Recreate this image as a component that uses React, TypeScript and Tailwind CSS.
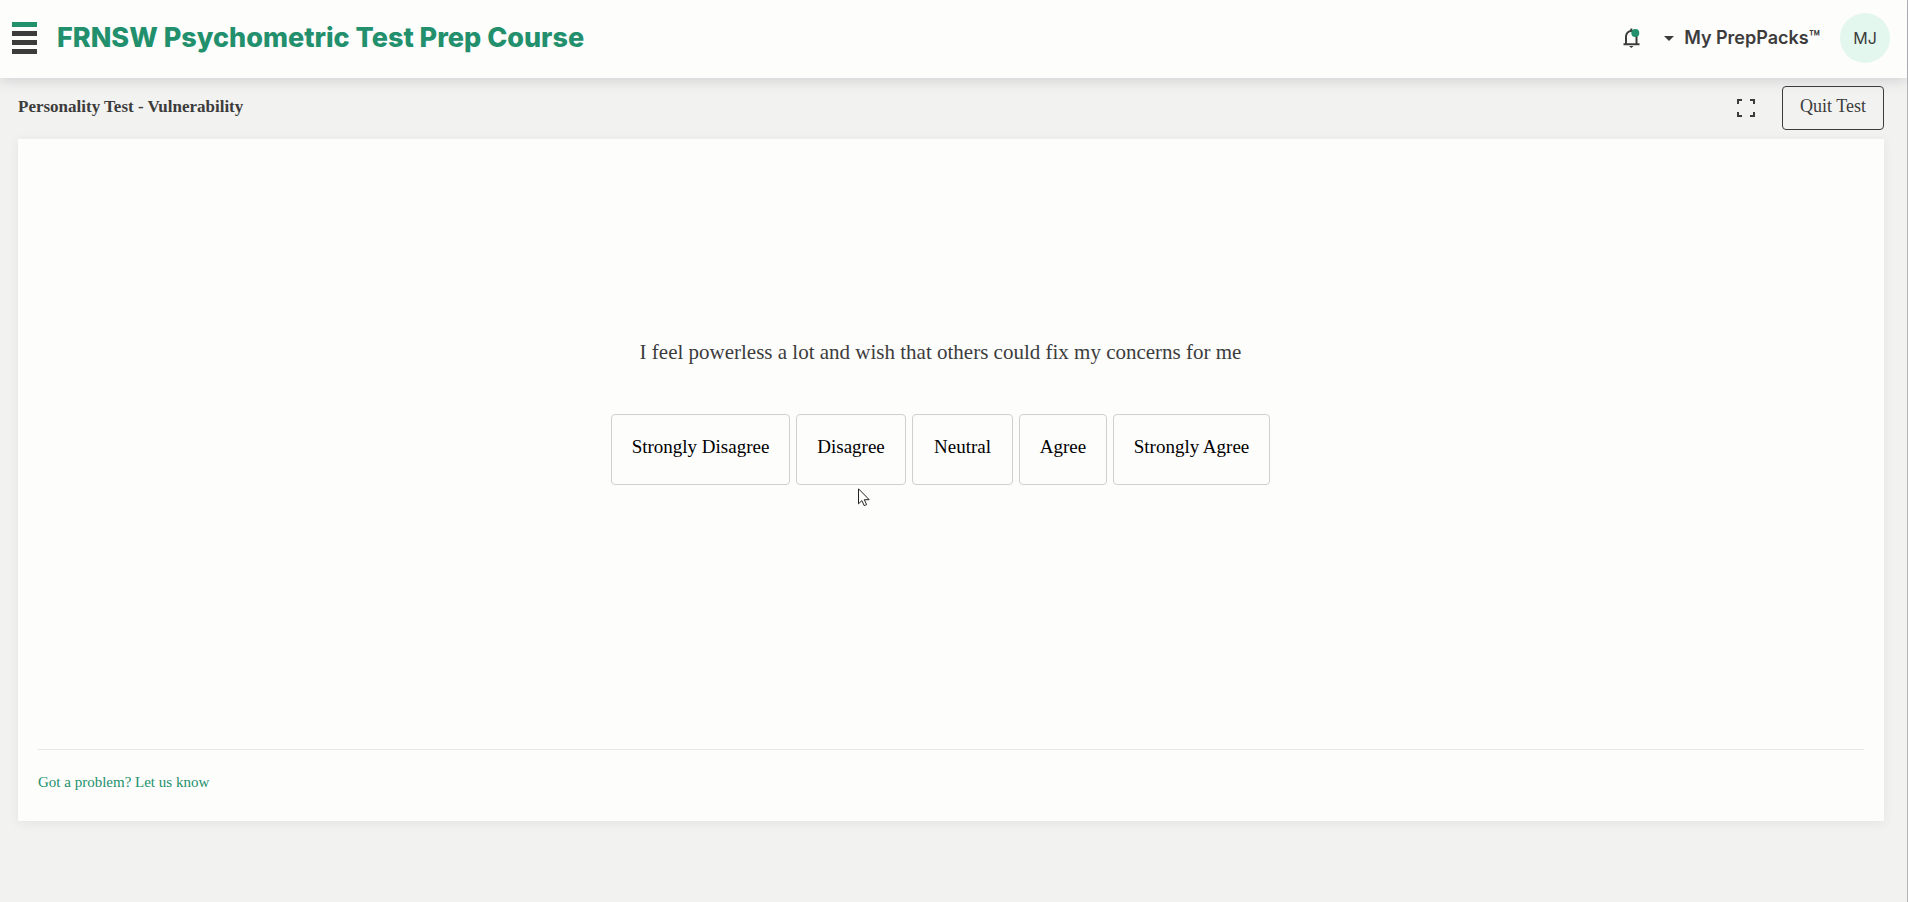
import { useState } from 'react';

const answers = [
  { label: 'Strongly Disagree', width: 'w-[179px]' },
  { label: 'Disagree', width: 'w-[110px]' },
  { label: 'Neutral', width: 'w-[101px]' },
  { label: 'Agree', width: 'w-[88px]' },
  { label: 'Strongly Agree', width: 'w-[157px]' },
];

function Header() {
  return (
    <header className="flex h-[78px] items-center justify-between bg-[#fdfdfc] pb-[2px] pl-3 pr-[17px] font-[Inter,sans-serif] shadow-[0_1px_14px_rgba(60,60,90,0.22)]">
      <div className="flex items-center gap-5">
        <button aria-label="Menu" className="flex flex-col gap-1">
          <span className="h-[5px] w-[25px] bg-[#22906c]" />
          <span className="h-[5px] w-[25px] bg-[#3c3c3c]" />
          <span className="h-[5px] w-[25px] bg-[#3c3c3c]" />
          <span className="h-[5px] w-[25px] bg-[#3c3c3c]" />
        </button>
        <h1 className="text-[27px] leading-8 font-extrabold text-[#22906c]">FRNSW Psychometric Test Prep Course</h1>
      </div>

      <div className="flex items-center text-[#3c3c3c]">
        <button aria-label="Notifications" className="mr-6">
          <svg width="17" height="20" viewBox="0 0 17 20" fill="none" stroke="currentColor" strokeWidth="2">
            <path d="M0.5 16.2h16M3 16V8.5C3 5.4 5.3 3 8.3 3s5.2 2.4 5.2 5.5V16" />
            <path d="M8.3 0.5v3" />
            <path d="M6 18h4.6L8.3 20z" fill="currentColor" stroke="none" />
            <circle cx="12.3" cy="5" r="4" fill="#22906c" stroke="none" />
          </svg>
        </button>
        <button className="mr-5 flex items-center gap-[10px] text-lg font-semibold">
          <svg width="10" height="5" viewBox="0 0 10 5" fill="currentColor">
            <path d="M0 0h10L5 5z" />
          </svg>
          My PrepPacks™
        </button>
        <button className="size-[50px] rounded-full bg-[#e4f7ee] text-base">MJ</button>
      </div>
    </header>
  );
}

function Cursor() {
  return (
    <svg className="absolute left-[62px] top-[74px]" width="12" height="19" viewBox="0 0 12 19" fill="#fff" stroke="#222">
      <path d="M0.5 0.8v15l3.4-3.2 2.3 5 2.4-1-2.3-4.9h4.9z" />
    </svg>
  );
}

export default function App() {
  const [selected, setSelected] = useState('');

  return (
    <div className="min-h-screen border-r border-[#b5b5b8] bg-[#f2f2f0] font-['Liberation_Serif',serif] text-[#3c3c3c]">
      <Header />

      <div className="flex h-[61px] items-center justify-between pb-[2px] pl-[18px] pr-[23px]">
        <h2 className="pb-[2px] text-[17px] leading-6 font-bold">Personality Test - Vulnerability</h2>
        <div className="flex items-center gap-[27px]">
          <button aria-label="Full screen">
            <svg width="18" height="18" viewBox="0 0 18 18" fill="none" stroke="currentColor" strokeWidth="2">
              <path d="M1 5V1h4M13 1h4v4M17 13v4h-4M5 17H1v-4" />
            </svg>
          </button>
          <button className="h-11 w-[102px] rounded border border-[#3c3c3c] pb-1 text-lg">Quit Test</button>
        </div>
      </div>

      <main className="ml-[18px] mr-[23px] bg-[#fdfdfc] px-5 shadow-[0_2px_10px_rgba(60,60,90,0.08)]">
        <div className="flex h-[610px] flex-col items-center pr-[21px] pt-[199px]">
          <p className="mb-12 text-[21px] leading-7">I feel powerless a lot and wish that others could fix my concerns for me</p>
          <div className="flex gap-[6px]">
            {answers.map(({ label, width }) => (
              <div key={label} className="relative">
                <button
                  onClick={() => setSelected(label)}
                  aria-pressed={selected === label}
                  className={`${width} h-[71px] cursor-pointer rounded border border-[#d0d0d2] pb-1 text-[19px] text-black`}
                >
                  {label}
                </button>
                {label === 'Disagree' && <Cursor />}
              </div>
            ))}
          </div>
        </div>
        <footer className="h-[72px] border-t border-[#e6e6ec] pt-5">
          <a href="#" className="text-[15px] leading-6 text-[#22906c]">Got a problem? Let us know</a>
        </footer>
      </main>
    </div>
  );
}
